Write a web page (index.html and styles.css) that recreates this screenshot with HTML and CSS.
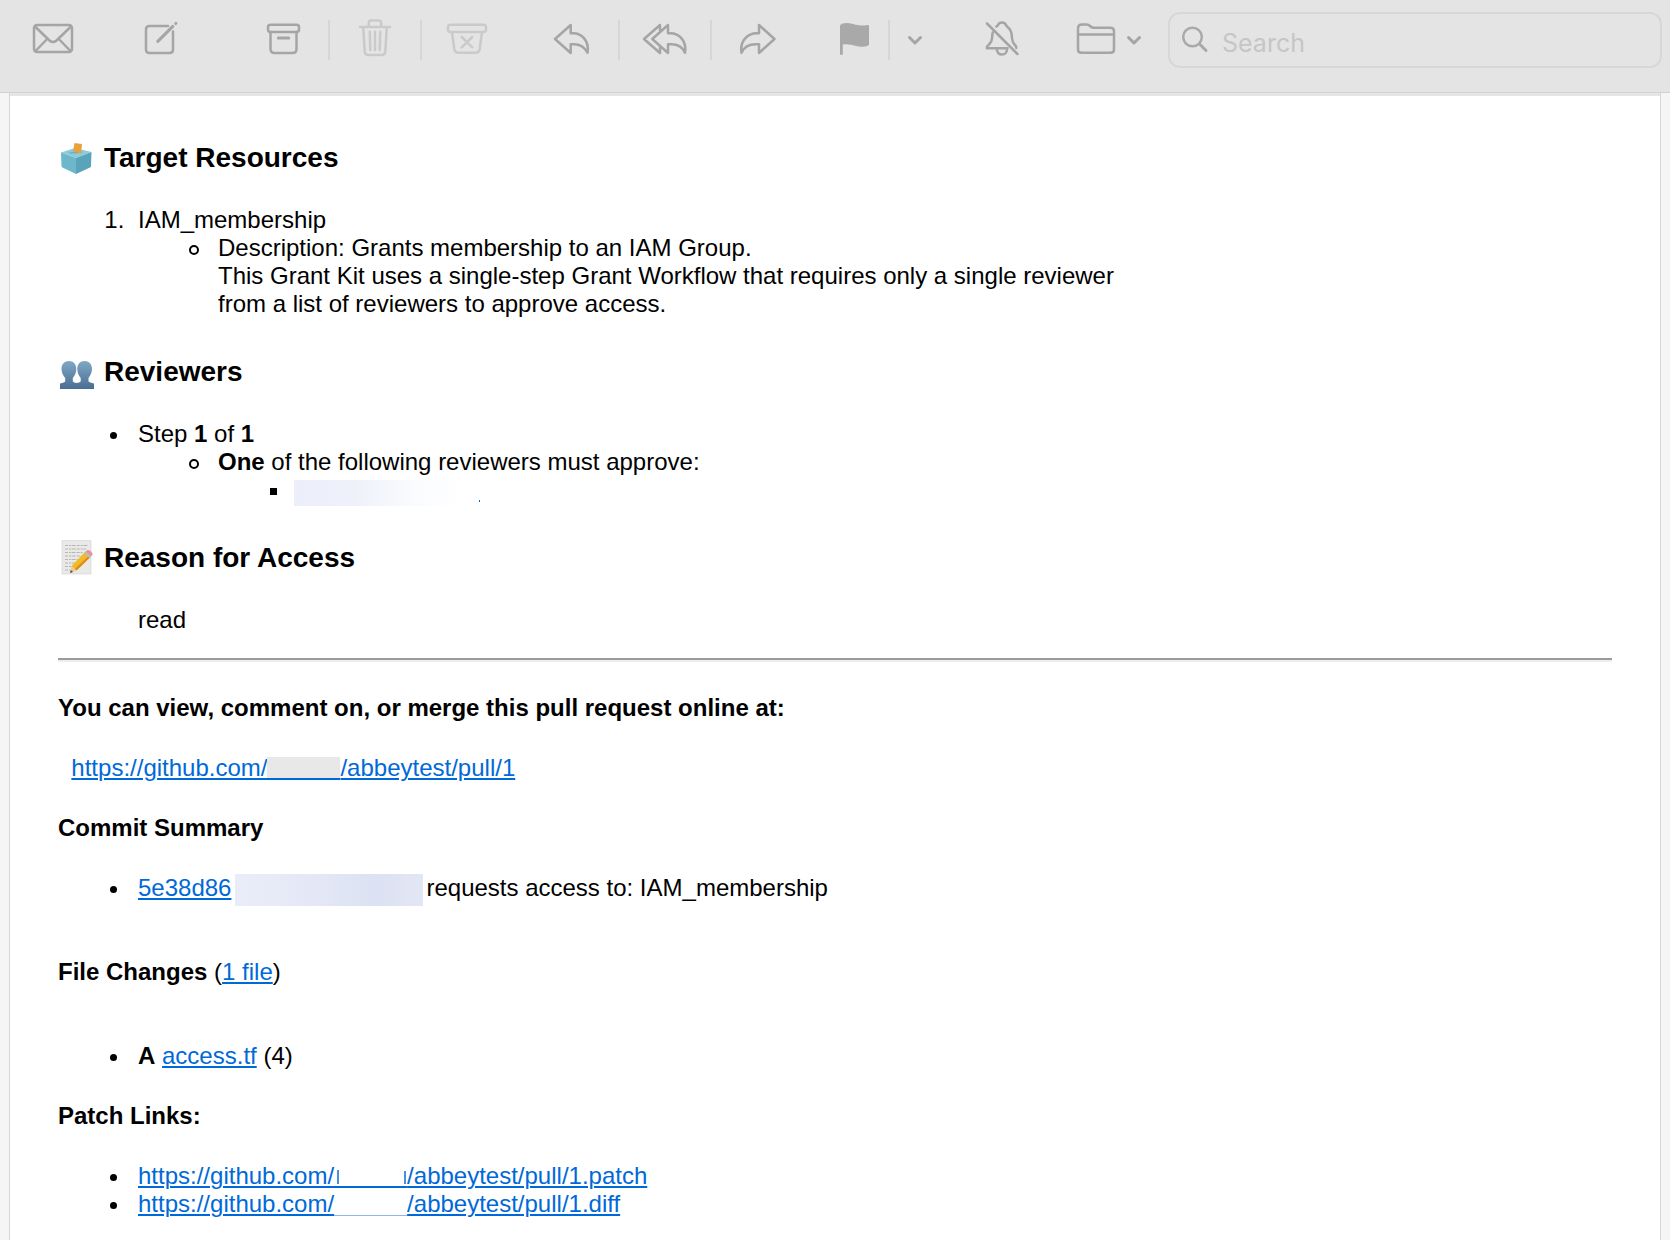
FILE: index.html
```html
<!DOCTYPE html>
<html lang="en">
<head>
<meta charset="utf-8">
<title>Mail</title>
<link rel="stylesheet" href="styles.css">
</head>
<body>
<header class="toolbar">
  <button class="tool" type="button" aria-label="Get mail">
    <svg class="icon" viewBox="0 0 48 48"><rect x="5" y="9" width="38" height="27" rx="3"/><path d="M6 10.500 20.500 24.500Q24 27.500 27.500 24.500L42 10.500M6.500 35 17.700 23.500M30.300 23.500 41.500 35"/></svg>
  </button>
  <button class="tool" type="button" aria-label="New message">
    <svg class="icon" viewBox="0 0 48 48"><path d="M33 10H14.500Q11 10 11 13.500V33.500Q11 37 14.500 37H34.500Q38 37 38 33.500V15.500"/><path class="pencil" d="M22.800 25.400 37.800 10.400M40.700 7.500 40.900 7.300"/></svg>
  </button>
  <div class="group group-delete">
    <button class="tool" type="button" aria-label="Archive">
      <svg class="icon" viewBox="0 0 48 48"><rect x="9" y="8.700" width="31" height="7.300" rx="2.500"/><path d="M11.500 16V33Q11.500 37 15.500 37H33.500Q37.500 37 37.500 33V16"/><path class="dash" d="M19.300 22H29.700"/></svg>
    </button>
    <span class="divider"></span>
    <button class="tool faded" type="button" aria-label="Delete">
      <svg class="icon" viewBox="0 0 48 48"><path d="M9 11H39M17.800 11V7Q17.800 4.500 20.300 4.500H27.700Q30.200 4.500 30.200 7V11M12.200 11 13.700 35.700Q14 39 17 39H31Q34 39 34.300 35.700L35.800 11M18.800 15.800 19.300 34M24 15.800V34M29.200 15.800 28.700 34"/></svg>
    </button>
    <span class="divider"></span>
    <button class="tool faded" type="button" aria-label="Move to Junk">
      <svg class="icon" viewBox="0 0 48 48"><rect x="5" y="8.700" width="38" height="7.300" rx="2.500"/><path d="M9 16 11.300 33Q11.900 36.800 15.500 36.800H32.500Q36.100 36.800 36.700 33L39 16M18.800 21 29.200 31.400M29.200 21 18.800 31.400"/></svg>
    </button>
  </div>
  <div class="group">
    <button class="tool" type="button" aria-label="Reply">
      <svg class="icon" viewBox="0 0 48 48"><path d="M21.700 9 6 23 21.700 37V28.300H25C32 28.300 35.500 31 38.500 36.800C40.500 25 33 17.300 24 17.300H21.700Z"/></svg>
    </button>
    <span class="divider"></span>
    <button class="tool" type="button" aria-label="Reply all">
      <svg class="icon" viewBox="0 0 48 48"><path d="M27 9 11.300 23 27 37V28.300H30.300C37.300 28.300 41.500 31 44 36.800C46 25 38.300 17.300 29.300 17.300H27ZM19 14.500V9L3 23 19 37V31.500"/></svg>
    </button>
    <span class="divider"></span>
    <button class="tool" type="button" aria-label="Forward">
      <svg class="icon" viewBox="0 0 48 48"><path d="M26 9 41.500 23 26 37V28.300H22.700C15.700 28.300 11 31 8.500 36.800C6.500 25 14.700 17.300 23.700 17.300H26Z"/></svg>
    </button>
  </div>
  <div class="group">
    <button class="tool tool-flag" type="button" aria-label="Flag">
      <svg class="icon" viewBox="0 0 48 48"><path class="solid" d="M11 9.500C13 6.500 19 6.500 24 8S34 10 38.300 9Q40 8.600 40 10.300V29Q37 31.500 30 30.500C23 29 19 27.500 13.800 28.500V38Q13.800 39 12.400 39T11 38Z"/></svg>
    </button>
    <span class="divider"></span>
    <button class="tool tool-menu" type="button" aria-label="Flag colours">
      <svg class="chevron" viewBox="0 0 20 48"><path d="M4.500 21.500 10 27 15.500 21.500"/></svg>
    </button>
  </div>
  <button class="tool" type="button" aria-label="Mute">
    <svg class="icon" viewBox="0 0 48 48"><path d="M19.300 10.500Q20.500 10.300 20.800 9.200Q22 6.500 25 6.500T29.200 9.200Q29.500 10.300 30.800 11.200Q34.500 14 34.800 20Q35 26 38 29Q39.500 30.500 39.300 32M15.700 16.500Q15.200 19 15.200 21Q15 25.500 12 28.500Q9.300 31 10 32.300H30.500M19.800 33.500Q20.500 38.500 25 38.500T30 33.500M10 7.500 40.500 38"/></svg>
  </button>
  <button class="tool tool-move" type="button" aria-label="Move to">
    <svg class="icon" viewBox="0 0 48 48"><path d="M7 12.500Q7 8.500 11 8.500H15.500Q17.500 8.500 19 10T22.500 11.800H39.500Q43 11.800 43 15.300V33.500Q43 36.800 39.500 36.800H10.500Q7 36.800 7 33.500ZM7 18.500H43"/></svg>
    <svg class="chevron" viewBox="0 0 20 48"><path d="M5.500 21.500 11 27 16.500 21.500"/></svg>
  </button>
  <label class="search">
    <svg class="search-icon" viewBox="0 0 28 28"><circle cx="10.500" cy="11" r="9.300"/><path class="handle" d="M17.500 18 24 24.500"/></svg>
    <input class="search-field" type="text" placeholder="Search" aria-label="Search">
  </label>
</header>

<main class="viewport">
  <article class="message">
    <h3 class="title">
      <svg class="emoji" viewBox="0 0 36 32" aria-hidden="true">
        <path fill="#8ccbdc" d="M3 10.500 17 6 33.500 10 18 16Z"/>
        <path fill="#6db7cb" d="M3 10.500 18 16V32L4.500 25.500Q3.500 25 3.500 24Z"/>
        <path fill="#5aa4bb" d="M18 16 33.500 10 33 24Q33 25 32 25.500L18 32Z"/>
        <path fill="#6fa9ba" d="M11 10.500 24 9.500 23.500 11 12 11.500Z"/>
        <path fill="#e9a23b" d="M16.500 1 24 2 23 11.500 15 9.500Z"/>
      </svg>
      Target Resources
    </h3>
    <ol class="list">
      <li>IAM_membership
        <ul class="list ringed">
          <li>Description: Grants membership to an IAM Group.<br>
            This Grant Kit uses a single-step Grant Workflow that requires only a single reviewer<br>
            from a list of reviewers to approve access.</li>
        </ul>
      </li>
    </ol>

    <h3 class="title">
      <svg class="emoji" viewBox="0 0 36 32" aria-hidden="true">
        <defs><linearGradient id="bust" x1="0" y1="0" x2="0" y2="1"><stop offset="0" stop-color="#7fa8c6"/><stop offset="1" stop-color="#4a6d92"/></linearGradient></defs>
        <path fill="url(#bust)" d="M11 5C15.500 5 18.300 8 18.300 13C18.300 17 16.500 20 14.800 22V25.500Q16 26.500 18.500 27Q21.500 26.500 22.700 25.500V22C21 20 19.300 17 19.300 13C19.300 8 22 5 26.500 5S34 8 34 13C34 17 32 20 30.500 22V25.500Q31.500 26.500 36 27.500V33H2V27.500Q6.500 26.500 7.200 25.500V22C5.500 20 3.500 17 3.500 13C3.500 8 6.500 5 11 5Z"/>
      </svg>
      Reviewers
    </h3>
    <ul class="list">
      <li>Step <b>1</b> of <b>1</b>
        <ul class="list ringed">
          <li><b>One</b> of the following reviewers must approve:
            <ul class="list squared">
              <li><span class="redacted redacted-reviewer"></span></li>
            </ul>
          </li>
        </ul>
      </li>
    </ul>

    <h3 class="title">
      <svg class="emoji" viewBox="0 0 36 32" aria-hidden="true">
        <path fill="#e9e9e7" stroke="#d2d2d0" stroke-width=".6" d="M4 -1.500H33V32H4Z"/>
        <path fill="none" stroke="#b0b0b0" stroke-width=".9" stroke-dasharray="3 1 2 .7 4 1" d="M7 3.500H30M7 7H28M7 10.500H25M7 14H23M7 17.500H20M7 21H18M7 24.500H15M7 28H12"/>
        <path fill="#f4b926" d="M13.500 24 27 10 32.500 15 18.500 28.500Z"/>
        <path fill="#d98e1c" d="M16.700 27 31 13.500 32.500 15 18.500 28.500Z"/>
        <path fill="#e8c999" d="M13.500 24 18.500 28.500 12 31Z"/>
        <path fill="#4b4b4b" d="M12.800 28 15 30 12 31Z"/>
        <path fill="#b9bcc0" d="M26 11 28 9 33.500 13.800 31.500 16Z"/>
        <path fill="#ec8f97" d="M27.700 9.300 29.500 8Q31 7.500 33 9.500T34.500 12.500L33 14.200Z"/>
      </svg>
      Reason for Access
    </h3>
    <p class="reason">read</p>
    <hr class="rule">

    <p class="line"><b>You can view, comment on, or merge this pull request online at:</b></p>
    <p class="line">&nbsp;&nbsp;<a class="link" href="#pull">https://github.com/<span class="redacted redacted-owner owner-grey"></span>/abbeytest/pull/1</a></p>
    <p class="line"><b>Commit Summary</b></p>
    <ul class="list">
      <li><a class="link" href="#commit">5e38d86</a><span class="redacted redacted-author"></span>requests access to: IAM_membership</li>
    </ul>
    <p class="line line-files"><b>File Changes</b> (<a class="link" href="#files">1 file</a>)</p>
    <ul class="list">
      <li><b>A</b> <a class="link" href="#access">access.tf</a> (4)</li>
    </ul>
    <p class="line line-patch"><b>Patch Links:</b></p>
    <ul class="list">
      <li><a class="link" href="#patch">https://github.com/<span class="redacted redacted-owner owner-edges"></span>/abbeytest/pull/1.patch</a></li>
      <li><a class="link" href="#diff">https://github.com/<span class="redacted redacted-owner owner-faint"></span>/abbeytest/pull/1.diff</a></li>
    </ul>
  </article>
</main>
</body>
</html>
```
FILE: styles.css
```css
* {
  box-sizing: border-box;
}

body {
  margin: 0;
  min-height: 100vh;
  display: flex;
  flex-direction: column;
  background: #f5f5f5;
  color: #000;
  font: 24px/28px "Liberation Sans", Helvetica, Arial, sans-serif;
}

/* Toolbar */
.toolbar {
  display: flex;
  align-items: center;
  gap: 16px;
  padding: 12px 8px 24px;
  background: #e4e4e4;
  border-bottom: 1px solid #d2d2d2;
}

.tool {
  display: flex;
  flex: none;
  align-items: center;
  justify-content: center;
  width: 90px;
  height: 48px;
  padding: 0;
  border: 0;
  background: none;
  color: #a5a5a5;
}

.tool-flag {
  width: 70px;
}

.tool-menu {
  width: 50px;
}

.tool-move {
  gap: 4px;
}

.faded {
  color: #cacaca;
}

.group {
  display: flex;
  flex: none;
  align-items: center;
}

.group-delete {
  margin-left: 18px;
}

.divider {
  width: 2px;
  height: 40px;
  background: #d6d6d6;
}

.icon,
.chevron,
.search-icon {
  flex: none;
  fill: none;
  stroke: currentColor;
  stroke-width: 2.5;
  stroke-linecap: round;
  stroke-linejoin: round;
}

.icon {
  width: 48px;
  height: 48px;
}

.chevron {
  width: 20px;
  height: 48px;
  stroke-width: 3;
}

.pencil,
.dash,
.handle {
  stroke-width: 3;
}

.solid {
  fill: #a9a9a9;
  stroke: none;
}

.search {
  display: flex;
  flex: 1;
  align-items: center;
  gap: 12px;
  min-width: 0;
  height: 56px;
  padding: 0 12px;
  border: 2px solid #d7d7d7;
  border-radius: 12px;
  color: #a9a9a9;
}

.search-icon {
  width: 28px;
  height: 28px;
}

.search-field {
  flex: 1;
  min-width: 0;
  padding: 6px 0 0;
  border: 0;
  outline: 0;
  background: none;
  color: #555;
  font: 25px/32px Inter, sans-serif;
}

.search-field::placeholder {
  color: #c6c6c6;
}

/* Message pane */
.viewport {
  display: flex;
  flex: 1;
  padding: 0 9px;
}

.message {
  flex: 1;
  min-width: 0;
  padding: 49px 48px 16px;
  background: #fff;
  border: solid #d6d6d6;
  border-width: 0 1px;
  box-shadow: inset 0 3px #e6e6e6;
}

.title {
  display: flex;
  gap: 10px;
  margin: 0 0 32px;
  font-size: 28px;
  line-height: 32px;
}

.list + .title {
  margin-top: 38px;
}

.emoji {
  flex: none;
  width: 36px;
  height: 32px;
  overflow: visible;
}

.list {
  margin: 0;
  padding-left: 73px;
}

.list > li {
  padding-left: 7px;
}

.ringed {
  list-style-image: url("data:image/svg+xml,%3Csvg xmlns='http://www.w3.org/2000/svg' width='15' height='11'%3E%3Ccircle cx='5' cy='5' r='4' fill='none' stroke='black' stroke-width='2'/%3E%3C/svg%3E");
}

.squared {
  list-style: square;
}

.reason {
  margin: 0 80px 24px;
}

.rule {
  height: 4px;
  margin: 0 0 32px;
  border: solid #9a9a9a;
  border-width: 2px 0 0;
  background: #eee;
}

.line {
  margin: 0 0 32px;
}

.line-files {
  margin: 56px 0;
}

.line-patch {
  margin-top: 32px;
}

.link {
  color: #0069d9;
  text-decoration: underline;
  text-decoration-thickness: 2px;
  text-underline-offset: 2px;
}

/* Blocks that hide personal details */
.redacted {
  display: inline-block;
}

.redacted-owner {
  width: 73px;
  height: 23px;
  border-bottom: 2px solid #0069d9;
  vertical-align: -4px;
}

.owner-grey {
  background: #e8e8e8;
}

.owner-edges {
  background:
    linear-gradient(#4a90e2, #4a90e2) 3px 5px / 2px 14px no-repeat,
    linear-gradient(#4a90e2, #4a90e2) 70px 6px / 2px 13px no-repeat;
}

.owner-faint {
  border-bottom: 1px solid #8fb4ee;
}

.redacted-reviewer {
  width: 186px;
  height: 26px;
  margin: 0 0 -2px -4px;
  background:
    linear-gradient(#0069d9, #0069d9) 185px 20px / 1px 2px no-repeat,
    linear-gradient(90deg, #eceffa 0, #eef1fa 60px, #fafbfe 120px, #fff 170px);
  vertical-align: -6px;
}

.redacted-author {
  width: 188px;
  height: 32px;
  margin: 0 3px -4px 4px;
  background: linear-gradient(90deg, #eaedf9, #e4e8f6 40%, #dce2f3 75%, #e3e6f4);
  vertical-align: -6px;
}
```
